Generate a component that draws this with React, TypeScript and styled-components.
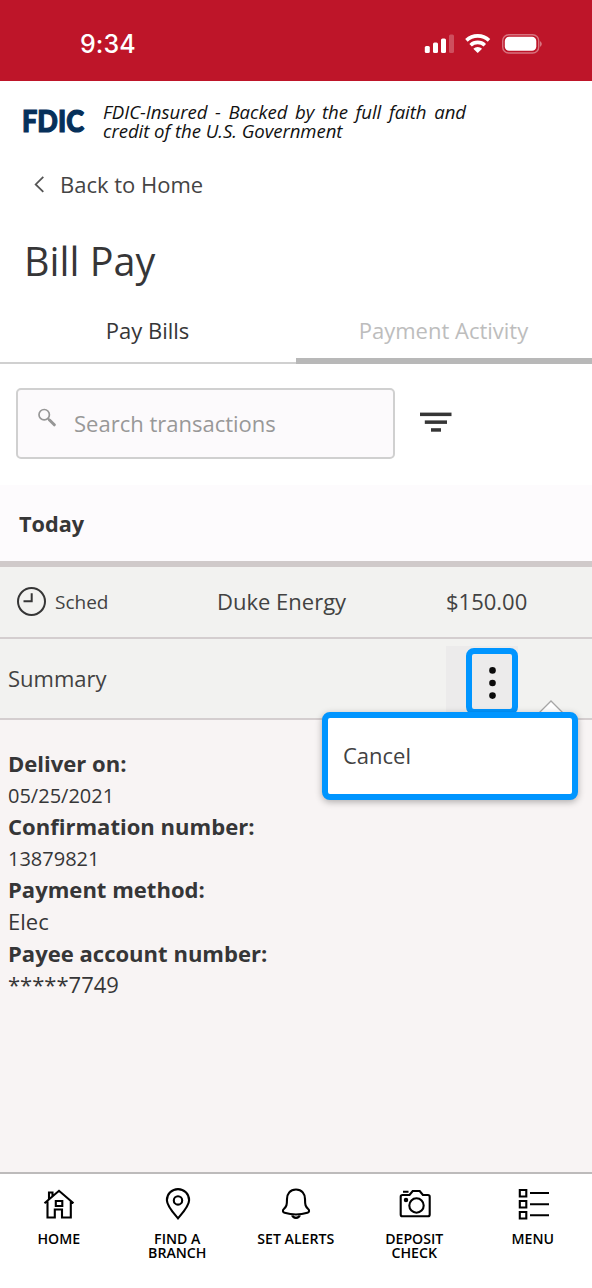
import React from "react";
import styled, { createGlobalStyle } from "styled-components";

const Global = createGlobalStyle`
  *, *::before, *::after { box-sizing: border-box; }
  body { margin: 0; background: #fff; }
  h1, p, dl, dt, dd { margin: 0; }
  button { font: inherit; color: inherit; background: none; border: 0; padding: 0; }
`;

const Screen = styled.div`
  width: 592px;
  height: 1288px;
  display: flex;
  flex-direction: column;
  overflow: hidden;
  background: #fff;
  color: #363637;
  font: 22px/30px "Open Sans", "Noto Sans", sans-serif;
  white-space: nowrap;
`;

const StatusBar = styled.header`
  flex: none;
  height: 81px;
  display: flex;
  justify-content: space-between;
  align-items: center;
  padding: 7px 49px 0 80px;
  background: #be1529;
  color: #fff;
`;

const Clock = styled.span`
  font: 500 25px/30px Inter, sans-serif;
  letter-spacing: 0.1px;
`;

const Insured = styled.div`
  flex: none;
  height: 69px;
  display: flex;
  padding: 21px 0 0 22px;
  gap: 17px;
`;

const Logo = styled.svg`
  flex: none;
  overflow: visible;
`;

const Tagline = styled.div`
  width: 363px;
  color: #111;
  font: italic 18.6px/19px "Open Sans", sans-serif;
  letter-spacing: -0.05px;
`;

const TaglineRow = styled.div<{ $fill?: boolean }>`
  text-align-last: ${(p) => (p.$fill ? "justify" : "left")};
`;

const BackLink = styled.button`
  flex: none;
  height: 68px;
  display: flex;
  align-items: center;
  gap: 15px;
  padding: 0 0 0 34px;
  color: #444;
`;

const Title = styled.h1`
  flex: none;
  height: 87px;
  padding: 18px 0 0 24px;
  font-size: 39.5px;
  font-weight: 400;
  line-height: 50px;
`;

const Tabs = styled.nav`
  flex: none;
  height: 59px;
  display: flex;
  border-bottom: 2px solid #d0d0d0;
`;

const Tab = styled.button<{ $active?: boolean }>`
  width: 296px;
  height: ${(p) => (p.$active ? 59 : 57)}px;
  padding-bottom: ${(p) => (p.$active ? 3 : 7)}px;
  padding-right: 1px;
  border-bottom: ${(p) => (p.$active ? "6px solid #b8b8b8" : "0")};
  color: ${(p) => (p.$active ? "#bdbdbd" : "#363637")};
`;

const Tools = styled.div`
  flex: none;
  height: 121px;
  display: flex;
  align-items: flex-start;
  gap: 25px;
  padding: 24px 0 0 16px;
`;

const Search = styled.div`
  width: 379px;
  height: 71px;
  display: flex;
  gap: 18px;
  padding: 18px 0 0 20px;
  border: 2px solid #d0d0d0;
  border-radius: 5px;
  background: #fcfafc;
  color: #989898;
`;

const FilterIcon = styled.svg`
  margin-top: 23px;
`;

const DayHeading = styled.div`
  flex: none;
  height: 82px;
  padding: 24px 0 0 19px;
  border-bottom: 6px solid #d0caca;
  background: #fdfbfd;
  font-size: 21.7px;
  font-weight: 700;
`;

const Transaction = styled.div`
  flex: none;
  height: 72px;
  display: grid;
  grid-template-columns: 217px 229px 1fr;
  align-items: center;
  border-bottom: 2px solid #d4cecf;
  background: #f2f2f0;
  color: #424242;
`;

const Cell = styled.span`
  padding-bottom: 2px;
`;

const Status = styled.div`
  display: flex;
  align-items: center;
  gap: 9px;
  padding-left: 17px;
  font-size: 19px;
`;

const Summary = styled.div`
  flex: none;
  position: relative;
  height: 81px;
  display: flex;
  align-items: flex-start;
  justify-content: space-between;
  padding: 7px 74px 0 8px;
  border-bottom: 2px solid #d4cecf;
  background: #f2f2f0;
`;

const SummaryLabel = styled.span`
  padding-top: 17px;
  color: #424242;
`;

const Actions = styled.div`
  width: 72px;
  height: 66px;
  display: flex;
  justify-content: flex-end;
  padding-top: 2px;
  background: #ecebeb;
`;

const MoreButton = styled.button`
  width: 52px;
  height: 67px;
  display: flex;
  justify-content: center;
  padding-top: 13px;
  border: 6px solid #0095ff;
  border-radius: 8px;
`;

const Menu = styled.div`
  position: absolute;
  top: 73px;
  right: 14px;
  width: 256px;
  height: 88px;
  padding: 22px 15px;
  border: 6px solid #0095ff;
  border-radius: 8px;
  background: #fff;
  box-shadow: 0 2px 7px rgba(0, 0, 0, 0.3);
  color: #424242;
`;

const Caret = styled.svg`
  position: absolute;
  top: 61px;
  right: 29px;
`;

const Details = styled.dl`
  flex: 1;
  padding: 28px 8px 0;
  background: #f8f4f4;
`;

const Term = styled.dt`
  height: 31.6px;
  line-height: 31.6px;
  font-size: 22.05px;
  font-weight: 700;
`;

const Value = styled.dd<{ $size?: number }>`
  height: 31.6px;
  line-height: ${(p) => (p.$size ? 31.2 : 31.6)}px;
  font-size: ${(p) => p.$size ?? 22}px;
`;

const BottomNav = styled.nav`
  flex: none;
  height: 116px;
  display: grid;
  grid-template-columns: repeat(5, 118.5px);
  border-top: 2px solid #bdbbbb;
  background: #fff;
`;

const NavItem = styled.button`
  display: flex;
  flex-direction: column;
  align-items: center;
  padding: 14px 1px 0 0;
  gap: 11px;
  color: #000;
  font-size: 14.15px;
  font-weight: 600;
  line-height: 14px;
`;

const NavIcon = styled.svg`
  flex: none;
  width: 32px;
  height: 33px;
  margin-left: 1px;
  fill: none;
  stroke: #000;
  stroke-width: 2.1;
`;

export default function App() {
  return (
    <Screen>
      <Global />
      <StatusBar>
        <Clock>9:34</Clock>
        <svg width="119" height="22" viewBox="0 0 119 22" fill="#fff">
          <rect x="0.8" y="13" width="5" height="7" rx="1.5" />
          <rect x="9" y="9.5" width="5" height="10.5" rx="1.5" />
          <rect x="17" y="5.5" width="5" height="14.5" rx="1.5" />
          <rect x="25" y="1.5" width="5" height="18.5" rx="1.5" opacity="0.25" />
          <g fill="none" stroke="#fff" strokeWidth="3.6">
            <path d="M42.4 7.4a16.5 16.5 0 0 1 22.6 0" />
            <path d="M46.6 12.2a10.4 10.4 0 0 1 14.2 0" />
          </g>
          <path d="M49.3 15.8a6.6 6.6 0 0 1 8.8 0l-4.4 4.2z" />
          <rect x="78.7" y="1.7" width="36" height="18.3" rx="6" fill="none" stroke="#fff" strokeWidth="1.4" opacity="0.4" />
          <rect x="80.8" y="3.8" width="31.5" height="14" rx="4.3" />
          <path d="M116.2 7.9q3 3 0 6z" opacity="0.5" />
        </svg>
      </StatusBar>
      <Insured>
        <Logo width="64" height="34" viewBox="0 0 64 34">
          <text x="0" y="29.8" textLength="62" lengthAdjust="spacingAndGlyphs" fill="#06305a" stroke="#06305a" strokeWidth="1.2" fontFamily="Lato" fontWeight="900" fontSize="30.5">FDIC</text>
        </Logo>
        <Tagline>
          <TaglineRow $fill>FDIC-Insured - Backed by the full faith and</TaglineRow>
          <TaglineRow>credit of the U.S. Government</TaglineRow>
        </Tagline>
      </Insured>
      <BackLink>
        <svg width="11" height="18" viewBox="0 0 11 18" fill="none" stroke="#555" strokeWidth="1.8">
          <path d="M9.3 1.9 1.7 9.4l7.6 7.5" />
        </svg>
        Back to Home
      </BackLink>
      <Title>Bill Pay</Title>
      <Tabs>
        <Tab>Pay Bills</Tab>
        <Tab $active>Payment Activity</Tab>
      </Tabs>
      <Tools>
        <Search>
          <svg width="18" height="20" viewBox="0 0 18 20" fill="none" stroke="#969696">
            <circle cx="6.2" cy="6.7" r="5.2" strokeWidth="1.7" />
            <path d="m10 10.5 1.8 1.8" strokeWidth="1.8" />
            <path d="m11.5 12 4.8 4.8" strokeWidth="3" strokeLinecap="round" />
          </svg>
          Search transactions
        </Search>
        <FilterIcon width="32" height="22" viewBox="0 0 32 22" fill="#363636">
          <rect x="0" y="1.6" width="31.5" height="3.5" />
          <rect x="4.8" y="9.4" width="22.2" height="3.5" />
          <rect x="11" y="17.2" width="10" height="3.5" />
        </FilterIcon>
      </Tools>
      <DayHeading>Today</DayHeading>
      <Transaction>
        <Status>
          <svg width="29" height="30" viewBox="0 0 29 30" fill="none" stroke="#363636">
            <circle cx="14.5" cy="14.5" r="13.5" strokeWidth="2" />
            <path d="M6.5 14.3h8.2V6.2" strokeWidth="2" />
          </svg>
          Sched
        </Status>
        <Cell>Duke Energy</Cell>
        <Cell>$150.00</Cell>
      </Transaction>
      <Summary>
        <SummaryLabel>Summary</SummaryLabel>
        <Actions>
          <MoreButton>
            <svg width="8" height="33" viewBox="0 0 8 33" fill="#0b0b0b">
              <circle cx="4.5" cy="3.4" r="3.3" />
              <circle cx="4.5" cy="16" r="3.3" />
              <circle cx="4.5" cy="28.6" r="3.3" />
            </svg>
          </MoreButton>
        </Actions>
        <Caret width="24" height="13" viewBox="0 0 24 13" fill="#fff" stroke="#a6a6a6" strokeWidth="1.3">
          <path d="M0 13 12 1l12 12" />
        </Caret>
        <Menu>Cancel</Menu>
      </Summary>
      <Details>
        <Term>Deliver on:</Term>
        <Value $size={20}>05/25/2021</Value>
        <Term>Confirmation number:</Term>
        <Value $size={20}>13879821</Value>
        <Term>Payment method:</Term>
        <Value>Elec</Value>
        <Term>Payee account number:</Term>
        <Value>*****7749</Value>
      </Details>
      <BottomNav>
        <NavItem>
          <NavIcon viewBox="0 0 32 33">
            <path d="M1.5 15.3 16 2.8l14.500 12.500M4.500 13.500v16h7.300v-8h7.200v8h8.800v-16M6 11V4.500h3.500v3.500M12.800 13h6.500v5h-6.500z" />
          </NavIcon>
          HOME
        </NavItem>
        <NavItem>
          <NavIcon viewBox="0 0 32 33">
            <path d="M16 30.3C11.500 25 4.900 18 4.900 12.200a11.100 11.100 0 0 1 22.200 0C27.100 18 20.500 25 16 30.300z" />
            <circle cx="16" cy="12.4" r="4.2" />
          </NavIcon>
          <span>FIND A<br />BRANCH</span>
        </NavItem>
        <NavItem>
          <NavIcon viewBox="0 0 32 33">
            <path d="M16 1.5c-6 0-9 4.500-9 9.500 0 6-.5 7.500-3.200 10-1.500 1.300-1 3.300.8 3.800 7 2 15.800 2 22.800 0 1.800-.5 2.300-2.500.8-3.800-2.700-2.500-3.200-4-3.200-10 0-5-3-9.500-9-9.500zM11.900 26.300c.4 2 1.800 3.600 4.100 3.600s3.700-1.600 4.100-3.600" />
          </NavIcon>
          SET ALERTS
        </NavItem>
        <NavItem>
          <NavIcon viewBox="0 0 32 33">
            <path d="M3.500 7h7l3.200-4h7l3.200 4h5q1.800 0 1.800 1.800v17.700q0 1.800-1.800 1.800H3.500q-1.800 0-1.800-1.800V8.800Q1.700 7 3.500 7zM4 3.800h5.500" />
            <circle cx="17.5" cy="17.5" r="7.2" />
            <circle cx="7" cy="12" r="1.2" />
          </NavIcon>
          <span>DEPOSIT<br />CHECK</span>
        </NavItem>
        <NavItem>
          <NavIcon viewBox="0 0 32 33">
            <path d="M2.800 2h6.500v6.500H2.800zM2.800 13h6.500v6.500H2.800zM2.800 24h6.500v6.500H2.800zM13 5h19M13 16.200h19M13 27.300h19" />
          </NavIcon>
          MENU
        </NavItem>
      </BottomNav>
    </Screen>
  );
}
